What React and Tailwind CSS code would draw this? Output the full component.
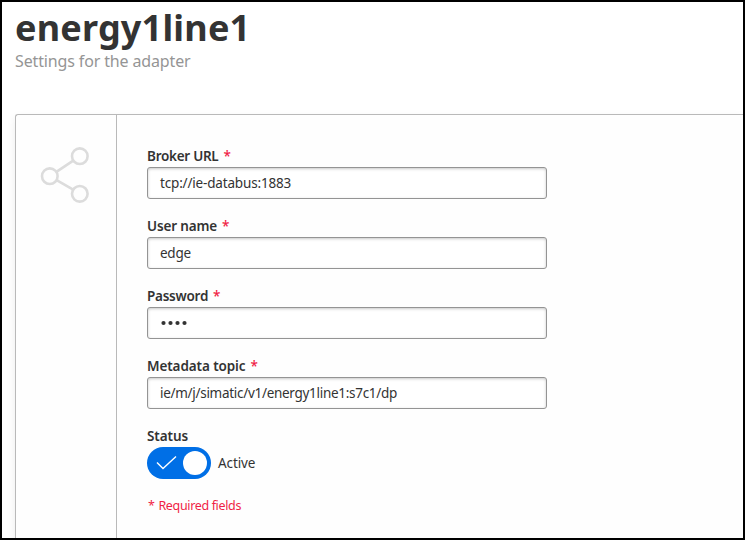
const fields = [
  { label: 'Broker URL', value: 'tcp://ie-databus:1883', labelTrack: 'tracking-[-0.27px]', valueTrack: 'tracking-[-0.17px]' },
  { label: 'User name', value: 'edge', labelTrack: 'tracking-[-0.15px]', valueTrack: 'tracking-[-0.25px]' },
  { label: 'Password', value: '', labelTrack: 'tracking-[-0.25px]', valueTrack: '' },
  { label: 'Metadata topic', value: 'ie/m/j/simatic/v1/energy1line1:s7c1/dp', labelTrack: 'tracking-[-0.1px]', valueTrack: 'tracking-[-0.29px]' },
];

function ShareIcon() {
  return (
    <svg width="52" height="58" viewBox="0 0 52 58" fill="none" stroke="#dcdcdc" strokeWidth="2.6">
      <circle cx="9.8" cy="30.2" r="7.8" />
      <circle cx="39.8" cy="10.2" r="7.8" />
      <circle cx="39.8" cy="47.8" r="7.8" />
      <path d="M16.4 25.8 33.2 14.6M16.6 34.2 33.2 43.6" />
    </svg>
  );
}

function Dots() {
  return (
    <svg className="mb-px" width="28" height="6" viewBox="0 0 28 6" fill="#333">
      {[3.5, 10.5, 17.5, 24.5].map((cx) => (
        <circle key={cx} cx={cx} cy="3" r="2.1" />
      ))}
    </svg>
  );
}

function Field({ label, value, labelTrack, valueTrack }) {
  return (
    <div className="mb-4">
      <div className="h-[22px] whitespace-nowrap text-[13.5px] leading-[22px] font-semibold">
        <span className={labelTrack}>{label}</span>
        <span className="ml-[5px] font-medium text-[#f01e46]">*</span>
      </div>
      <div className="flex h-8 w-[400px] items-center rounded-[3px] border border-[#949494] bg-white pl-3 text-[13.5px] whitespace-nowrap shadow-[inset_0_1px_3px_rgba(0,0,0,0.22)]">
        {value ? <span className={'pt-px ' + valueTrack}>{value}</span> : <Dots />}
      </div>
    </div>
  );
}

export default function App() {
  return (
    <div className="flex h-[540px] w-[745px] flex-col overflow-hidden border-2 border-black bg-white pl-[13px] font-['Noto_Sans',sans-serif] text-[#333]">
      <header className="h-28 shrink-0 whitespace-nowrap">
        <h1 className="h-12 text-[36px] leading-[51px] font-bold tracking-[0.2px]">energy1line1</h1>
        <p className="h-[22px] text-[16px] leading-[22px] tracking-[-0.14px] text-[#959595]">Settings for the adapter</p>
      </header>
      <main className="flex flex-1 rounded-tl-[3px] border-t border-l border-[#b9b9b9] bg-[#fefefe] shadow-[0_4px_10px_rgba(0,0,0,0.08)]">
        <aside className="w-[101px] shrink-0 border-r border-[#b9b9b9] pt-[31px] pl-6">
          <ShareIcon />
        </aside>
        <section className="pt-[30px] pl-[30px]">
          {fields.map((f) => (
            <Field key={f.label} {...f} />
          ))}
          <div className="h-[22px] text-[13.5px] leading-[22px] font-semibold tracking-[-0.1px]">Status</div>
          <div className="flex items-center gap-[7px]">
            <div className="flex h-8 w-16 items-center justify-between rounded-full bg-[#006fe6] pr-[4px] pl-[9px]">
              <svg width="21" height="16" viewBox="0 0 21 16" fill="none" stroke="white" strokeWidth="1.4">
                <path d="M1 7.5 7 13.5 20 1.5" />
              </svg>
              <span className="size-6 rounded-full bg-white" />
            </div>
            <span className="text-[13.5px] tracking-[-0.1px]">Active</span>
          </div>
          <p className="mt-4 pl-px text-[12.5px] leading-[22px] tracking-[-0.35px] whitespace-nowrap text-[#f01e46]">
            <span className="mr-[1px]">*</span> Required fields
          </p>
        </section>
      </main>
    </div>
  );
}
